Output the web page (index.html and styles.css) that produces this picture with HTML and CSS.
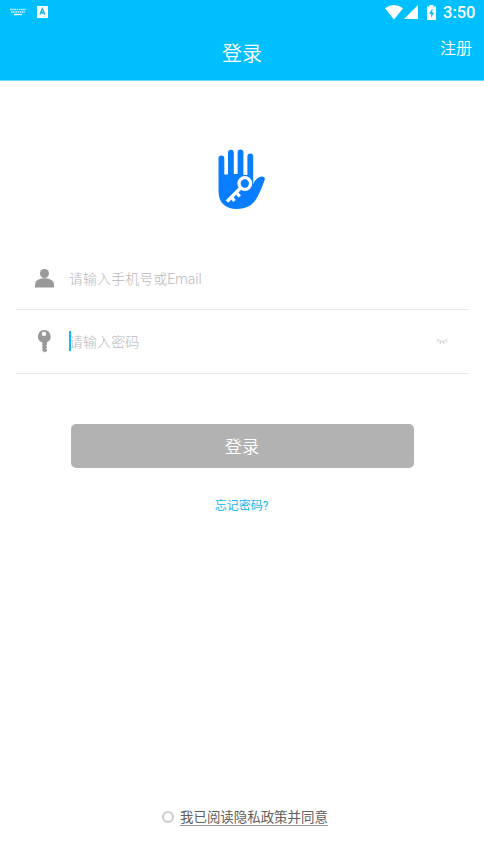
FILE: index.html
```html
<!DOCTYPE html>
<html lang="zh-CN">
<head>
<meta charset="utf-8">
<title>登录</title>
<link rel="stylesheet" href="styles.css">
</head>
<body>
<header class="header">
  <div class="status">
    <svg class="keyboard" width="16" height="8" viewBox="0 0 16 8"><path d="M0 1.5h16M1 4h14" stroke="#fff" stroke-width="1.5" stroke-dasharray="1.5 .7" opacity=".85"/><path d="M4 6.5h8" stroke="#fff" stroke-width="1.3"/></svg>
    <svg class="input-mode" width="11" height="12" viewBox="0 0 11 12"><rect width="11" height="12" rx="1" fill="#fff"/><path d="M3 8.6L5.3 2.8 7.8 8.6M3.8 6.7h3.3" fill="none" stroke="#19aee6" stroke-width="1.4"/><path d="M6 10.3h3" stroke="#9adcf4" stroke-width=".7"/></svg>
    <svg class="wifi" width="18" height="15" viewBox="0 0 18 15"><path d="M0 3.3Q9-3.3 18 3.3L9 14.5z" fill="#fff"/></svg>
    <svg class="signal" width="14" height="14" viewBox="0 0 14 14"><path d="M14 0v14H0z" fill="#fff"/></svg>
    <svg class="battery" width="9" height="15" viewBox="0 0 9 15"><path d="M2.5 0h4v1.5H9V15H0V1.5h2.5z" fill="#fff"/><path d="M5.4 3.5L2 8.7h2.1v4L7.2 7.4H5.3z" fill="#00bfff"/></svg>
    <span class="clock">3:50</span>
  </div>
  <div class="bar">
    <h1 class="title">登录</h1>
    <a class="register">注册</a>
  </div>
</header>
<main class="main">
  <svg class="logo" width="48" height="60" viewBox="0 0 48 60">
    <path d="M.5 9.300a2.900 2.900 0 0 1 5.800 0V25.500h3.700V3.600a2.900 2.900 0 0 1 5.800 0V25h3.800V3.300a2.900 2.900 0 0 1 5.800 0V26h4V7.300a2.900 2.900 0 0 1 5.800 0V35c2-4.700 5.200-7.400 8.500-7.600 2.200-.2 3.800 1.700 2.900 3.800C44.500 36.500 42.200 43 38.500 49.500 34.500 56.500 28 60 19 60 7 60 .5 53.500.5 42z" fill="#087dff"/>
    <circle cx="26.800" cy="34.500" r="5.800" fill="#087dff" stroke="#fff" stroke-width="3.300"/>
    <path d="M22.500 39L9 52.500M18.500 43.500l3.200 4M13.500 48.300l3 3.700" fill="none" stroke="#fff" stroke-width="3.300"/>
  </svg>
  <form class="form">
    <div class="field">
      <svg class="user" width="19" height="19" viewBox="0 0 19 19"><circle cx="9.500" cy="4.500" r="4.500" fill="#999"/><path d="M0 18.500v-2.500C0 11.500 4 9.300 9.500 9.300S19 11.500 19 16v2.500z" fill="#999"/></svg>
      <span class="hint">请输入手机号或Email</span>
    </div>
    <div class="field password">
      <svg class="key" width="19" height="23" viewBox="0 0 19 23"><path fill-rule="evenodd" d="M9 0A6.500 6.500 0 0 0 7.300 12.600V20.500L9.500 22.500l2.500-1.500v-1.600l-1-.8 1-.8v-1.300l-1-.9 1-.8v-2.500A6.500 6.500 0 0 0 9 0zm0 1.700a2.200 2.200 0 1 1 0 4.400 2.200 2.200 0 0 1 0-4.400z" fill="#999"/></svg>
      <span class="hint focused">请输入密码</span>
      <svg class="eye" width="12" height="7" viewBox="0 0 12 7"><path d="M.5 1Q6 6 11.500 1M2 2.500L.8 4.500M4.500 3.500L4 6M7.500 3.500L8 6M10 2.500l1.200 2" fill="none" stroke="#c4c4c4" stroke-width=".8"/></svg>
    </div>
    <button class="submit" type="button">登录</button>
    <a class="forgot">忘记密码?</a>
  </form>
</main>
<footer class="footer"><span class="radio"></span><span class="policy">我已阅读隐私政策并同意</span></footer>
</body>
</html>
```

FILE: styles.css
```css
* { box-sizing: border-box; }
body {
  margin: 0;
  height: 860px;
  display: flex;
  flex-direction: column;
  background: #fff;
  font-family: Roboto, "Noto Sans CJK SC", sans-serif;
  overflow: hidden;
}
svg { display: block; flex: none; }
.header { height: 81px; background: #00bfff; color: #fff; border-bottom: 1px solid #66d9ff; }
.status { height: 24px; display: flex; align-items: center; padding: 0 8px 0 10px; }
.input-mode { margin-left: 11px; }
.wifi { margin-left: auto; }
.signal { margin-left: 1px; }
.battery { margin-left: 9px; }
.clock { width: 33px; margin-left: 7px; padding-top: 1px; font-size: 16.500px; font-weight: 500; line-height: 24px; white-space: nowrap; }
.bar { height: 56px; display: grid; grid-template-columns: 1fr auto 1fr; align-items: start; }
.title { grid-column: 2; margin: 15px 0 0; font-size: 20px; font-weight: 350; line-height: 30px; }
.register { justify-self: end; margin: 13px 12px 0 0; font-size: 16px; font-weight: 350; line-height: 24px; }
.main { flex: 1; display: flex; flex-direction: column; align-items: center; padding: 68px 16px 0; }
.form { width: 100%; margin-top: 37px; display: flex; flex-direction: column; align-items: center; }
.field { width: 100%; height: 64px; display: flex; align-items: center; padding: 0 20px 0 19px; border-bottom: 1px solid #e6e6e6; }
.user { margin-top: 2px; }
.hint { position: relative; margin: 3px 0 0 15px; color: #b8b8b8; font-size: 14.050px; font-weight: 300; line-height: 21px; }
.focused { margin-top: 2px; }
.focused::before { content: ""; position: absolute; left: 0; top: -1px; width: 2px; height: 20px; background: #16b9ee; }
.eye { margin-left: auto; }
.submit { width: 343px; height: 44px; margin-top: 50px; padding: 0 0 1px; border: 0; border-radius: 5px; background: #b2b2b2; color: #fff; font: inherit; font-size: 17.300px; font-weight: 350; }
.forgot { margin: 29px 1px 0 0; color: #10b6ed; font-size: 12px; line-height: 18px; }
.footer { height: 54px; display: flex; align-items: flex-start; padding: 1px 0 0 162px; }
.radio { width: 12px; height: 12px; margin-top: 4px; border: 2px solid #ccc; border-radius: 50%; }
.policy { margin-left: 6px; color: #606060; font-size: 13.450px; line-height: 22px; height: 19px; border-bottom: 1px solid #999; }
```
